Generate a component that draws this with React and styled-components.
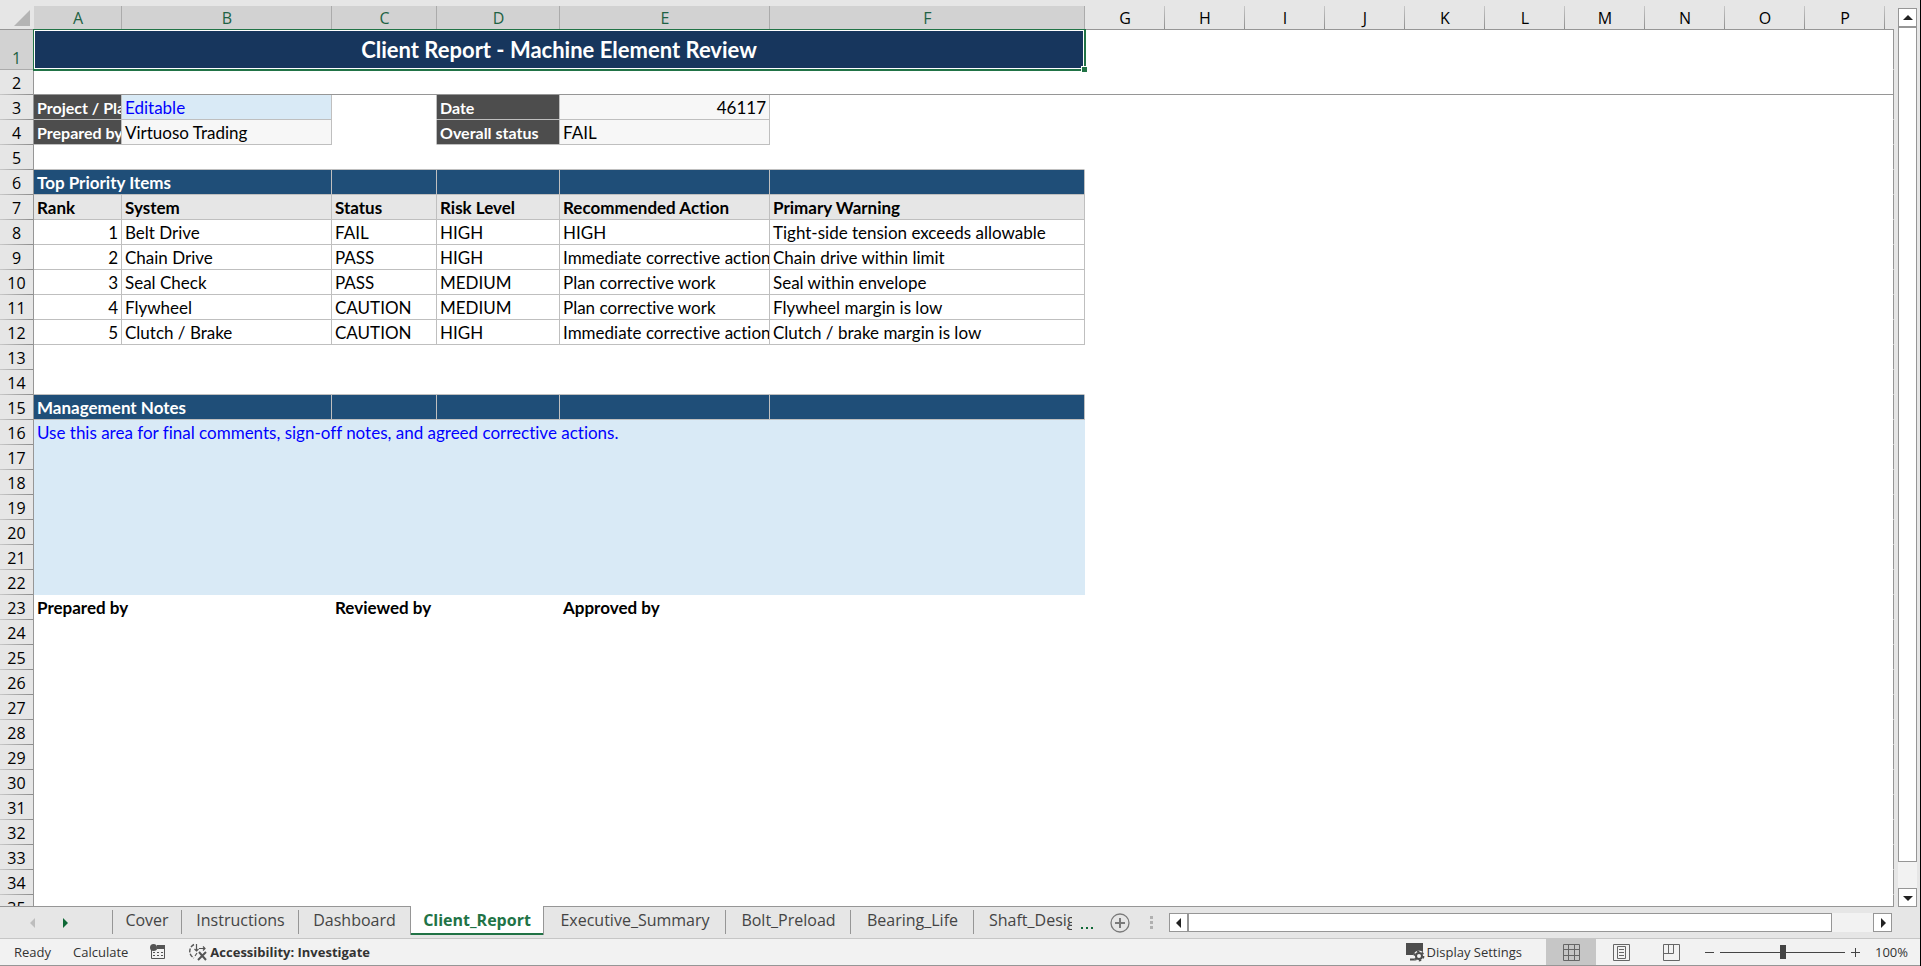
import React from "react";
import styled, { createGlobalStyle, css } from "styled-components";

const columns = [
  { id: "A", width: 88 },
  { id: "B", width: 210 },
  { id: "C", width: 105 },
  { id: "D", width: 123 },
  { id: "E", width: 210 },
  { id: "F", width: 315 },
  ..."GHIJKLMNOP".split("").map((id) => ({ id, width: 80 })),
];

const section = (title) => [
  { text: title, kind: "section", span: 2 },
  { kind: "section" },
  { kind: "section" },
  { kind: "section" },
  { kind: "section" },
];

const item = (...values) =>
  values.map((text, i) => ({ text, kind: "boxed", right: i === 0 }));

const blank = { kind: "plain" };

const rows = {
  1: [{ text: "Client Report - Machine Element Review", kind: "title", span: 6 }],
  3: [
    { text: "Project / Plant", kind: "label" },
    { text: "Editable", kind: "input" },
    { kind: "gap" },
    { text: "Date", kind: "label" },
    { text: "46117", kind: "value", right: true },
    blank,
  ],
  4: [
    { text: "Prepared by", kind: "label" },
    { text: "Virtuoso Trading", kind: "value" },
    { kind: "gap" },
    { text: "Overall status", kind: "label" },
    { text: "FAIL", kind: "value" },
    blank,
  ],
  5: [{ kind: "above", span: 6 }],
  6: section("Top Priority Items"),
  7: ["Rank", "System", "Status", "Risk Level", "Recommended Action", "Primary Warning"].map(
    (text) => ({ text, kind: "head" })
  ),
  8: item("1", "Belt Drive", "FAIL", "HIGH", "HIGH", "Tight-side tension exceeds allowable"),
  9: item("2", "Chain Drive", "PASS", "HIGH", "Immediate corrective action", "Chain drive within limit"),
  10: item("3", "Seal Check", "PASS", "MEDIUM", "Plan corrective work", "Seal within envelope"),
  11: item("4", "Flywheel", "CAUTION", "MEDIUM", "Plan corrective work", "Flywheel margin is low"),
  12: item("5", "Clutch / Brake", "CAUTION", "HIGH", "Immediate corrective action", "Clutch / brake margin is low"),
  14: [{ kind: "above", span: 6 }],
  15: section("Management Notes"),
  16: [
    {
      text: "Use this area for final comments, sign-off notes, and agreed corrective actions.",
      kind: "notes",
      span: 6,
      rowSpan: 7,
    },
  ],
  23: [
    { text: "Prepared by", kind: "sign", span: 2 },
    { text: "Reviewed by", kind: "sign", span: 2 },
    { text: "Approved by", kind: "sign" },
    blank,
  ],
};

const rowNumbers = Array.from({ length: 35 }, (_, i) => i + 1);

// rows covered by the merged notes block
const isMerged = (n) => n > 16 && n < 23;

const tabs = [
  { name: "Cover", width: 70 },
  { name: "Instructions", width: 117 },
  { name: "Dashboard", width: 111 },
  { name: "Client_Report", width: 134, active: true },
  { name: "Executive_Summary", width: 182 },
  { name: "Bolt_Preload", width: 125 },
  { name: "Bearing_Life", width: 123 },
  { name: "Shaft_Design", width: 98, cut: true },
];

const Sheet = () => (
  <Grid>
    <colgroup>
      <col width="34" />
      {columns.map((c) => (
        <col key={c.id} width={c.width} />
      ))}
      <col />
    </colgroup>
    <thead>
      <tr>
        <Corner aria-label="Select all">
          <svg width="16" height="16" viewBox="0 0 16 16">
            <path d="M16 0V16H0Z" fill="#b4b4b4" />
          </svg>
        </Corner>
        {columns.map((c, i) => (
          <ColumnHead key={c.id} scope="col" $selected={i < 6}>
            {c.id}
          </ColumnHead>
        ))}
        <ColumnHead as="td" $last />
      </tr>
    </thead>
    <tbody>
      {rowNumbers.map((n) => {
        const cells = rows[n] || [];
        return (
          <Row key={n} $tall={n === 1} $frozen={n === 2}>
            <RowHead scope="row" $selected={n === 1}>
              {n}
            </RowHead>
            {cells.map((cell, i) => (
              <Cell
                key={i}
                colSpan={cell.span}
                rowSpan={cell.rowSpan}
                $kind={cell.kind}
                $right={cell.right}
              >
                {cell.kind === "title" ? (
                  <Selection>
                    {cell.text}
                    <FillHandle />
                  </Selection>
                ) : (
                  cell.text
                )}
              </Cell>
            ))}
            <Cell colSpan={cells.length || isMerged(n) ? 11 : 17} $kind="plain" />
          </Row>
        );
      })}
    </tbody>
  </Grid>
);

const Arrow = ({ d, color = "#222" }) => (
  <svg width="10" height="10" viewBox="0 0 10 10">
    <path d={d} fill={color} />
  </svg>
);

const UP = "M5 2L10 7H0Z";
const DOWN = "M0 3H10L5 8Z";
const LEFT = "M7 0V10L2 5Z";
const RIGHT = "M3 0L8 5L3 10Z";

const App = () => {
  return (
    <Window>
      <GlobalStyle />
      <Main>
        <SheetPane>
          <Sheet />
        </SheetPane>
        <VerticalScroll>
          <ScrollButton aria-label="Scroll up">
            <Arrow d={UP} />
          </ScrollButton>
          <VerticalTrack>
            <VerticalThumb />
          </VerticalTrack>
          <ScrollButton aria-label="Scroll down">
            <Arrow d={DOWN} />
          </ScrollButton>
        </VerticalScroll>
      </Main>

      <TabBar>
        <TabNav>
          <PlainButton aria-label="Previous sheets">
            <Arrow d={LEFT} color="#bdbdbd" />
          </PlainButton>
          <PlainButton aria-label="Next sheets">
            <Arrow d={RIGHT} color="#0e6836" />
          </PlainButton>
        </TabNav>
        {tabs.map((t, i) => (
          <Tab
            key={t.name}
            $width={t.width}
            $active={t.active}
            $first={i === 0}
            $line={!t.active && !t.cut && !(tabs[i + 1] && tabs[i + 1].active)}
          >
            {t.cut ? <Clip>{t.name}</Clip> : t.name}
          </Tab>
        ))}
        <More aria-label="More sheets">
          <svg width="14" height="4" viewBox="0 0 14 4">
            <path d="M1 1H3V3H1ZM6 1H8V3H6ZM11 1H13V3H11Z" fill="#0e6836" />
          </svg>
        </More>
        <PlainButton aria-label="New sheet">
          <svg width="20" height="20" viewBox="0 0 20 20" fill="none" stroke="#7a7a7a">
            <circle cx="10" cy="10" r="9" strokeWidth="1.3" />
            <path d="M10 5V15M5 10H15" strokeWidth="2" />
          </svg>
        </PlainButton>
        <Grip>
          <svg width="4" height="14" viewBox="0 0 4 14">
            <path d="M0 0H3V3H0ZM0 5H3V8H0ZM0 10H3V13H0Z" fill="#b0b0b0" />
          </svg>
        </Grip>
        <HorizontalScroll>
          <ScrollButton aria-label="Scroll left">
            <Arrow d={LEFT} />
          </ScrollButton>
          <HorizontalTrack>
            <HorizontalThumb />
          </HorizontalTrack>
          <ScrollButton aria-label="Scroll right">
            <Arrow d={RIGHT} />
          </ScrollButton>
        </HorizontalScroll>
      </TabBar>

      <StatusBar>
        <StatusGroup>
          <span>Ready</span>
          <span>Calculate</span>
          <StatusButton aria-label="Record macro">
            <svg width="16" height="16" viewBox="0 0 16 16">
              <path d="M1.5 4V14.5H14.5V4" fill="none" stroke="#555" />
              <path d="M7 1H15V5H7Z" fill="#555" />
              <circle cx="3.5" cy="3.5" r="3.5" fill="#555" />
              <path
                d="M3 8.5H5M7 8.5H9M11 8.5H13M3 11.5H5M7 11.5H9M11 11.5H13M6 5H7"
                stroke="#555"
              />
            </svg>
          </StatusButton>
          <StatusButton $bold>
            <svg width="20" height="18" viewBox="0 0 20 18" fill="none" stroke="#555">
              <path d="M6 1.5A7.5 7.5 0 0 0 6 15" strokeWidth="1.4" strokeDasharray="4 1.4" />
              <path
                d="M8.5 1V8M6.5 6L8.5 8L10.5 6M11 5.5H17M15 3.5L17 5.5L15 7.5M9 10L7 13"
                strokeWidth="1.2"
              />
              <path d="M11 9L18 17M18 9L10 17" strokeWidth="2" />
            </svg>
            Accessibility: Investigate
          </StatusButton>
        </StatusGroup>
        <StatusGroup $end>
          <StatusButton>
            <svg width="20" height="20" viewBox="0 0 20 20">
              <path d="M1 1H18V13H1Z" fill="#4d4d4d" />
              <path d="M5 17.5H11" stroke="#4d4d4d" strokeWidth="2" />
              <circle cx="14" cy="14" r="5.5" fill="#f2f2f2" />
              <circle cx="14" cy="14" r="3" fill="none" stroke="#4d4d4d" strokeWidth="2" />
              <circle
                cx="14"
                cy="14"
                r="4.6"
                fill="none"
                stroke="#4d4d4d"
                strokeWidth="1.6"
                strokeDasharray="2.4 2.4"
              />
            </svg>
            Display Settings
          </StatusButton>
          <Views>
            <ViewButton aria-label="Normal" $on>
              <svg width="17" height="17" viewBox="0 0 17 17" fill="none" stroke="#666">
                <path d="M.5 .5H16.5V16.5H.5ZM5.5 0V17M11.5 0V17M0 5.5H17M0 11.5H17" />
              </svg>
            </ViewButton>
            <ViewButton aria-label="Page layout">
              <svg width="17" height="17" viewBox="0 0 17 17" fill="none" stroke="#666">
                <path d="M.5 .5H16.5V16.5H.5ZM4.5 2.5H12.5V14.5H4.5ZM6 5.5H11M6 8.5H11M6 11.5H11" />
              </svg>
            </ViewButton>
            <ViewButton aria-label="Page break preview">
              <svg width="17" height="17" viewBox="0 0 17 17" fill="none" stroke="#666">
                <path d="M.5 .5H16.5V16.5H.5ZM.5 9.5H10.5V.5M5.5 .5V9.5" />
              </svg>
            </ViewButton>
          </Views>
          <ZoomButton aria-label="Zoom out">
            <svg width="9" height="9" viewBox="0 0 9 9">
              <path d="M0 4.5H9" stroke="#444" />
            </svg>
          </ZoomButton>
          <ZoomSlider type="range" aria-label="Zoom" min="0" max="200" defaultValue="100" />
          <ZoomButton aria-label="Zoom in">
            <svg width="9" height="9" viewBox="0 0 9 9">
              <path d="M0 4.5H9M4.5 0V9" stroke="#444" />
            </svg>
          </ZoomButton>
          <Percent>100%</Percent>
        </StatusGroup>
      </StatusBar>
    </Window>
  );
};

const line = "#969696";
const cellLine = "#bfbfbf";
const chrome = "#e6e6e6";
const ui = `"Open Sans", "Noto Sans", sans-serif`;
const body = `Lato, "Open Sans", sans-serif`;

const GlobalStyle = createGlobalStyle`
  * {
    box-sizing: border-box;
  }
  body {
    margin: 0;
    overflow: hidden;
  }
  button {
    padding: 0;
    border: 0;
    background: none;
    font: inherit;
    color: inherit;
  }
  svg {
    display: block;
    flex: none;
  }
`;

const Window = styled.div`
  height: 100vh;
  display: flex;
  flex-direction: column;
  background: ${chrome};
  border-right: 1px solid #000;
  font-family: ${ui};
`;

const Main = styled.div`
  flex: 1;
  min-height: 0;
  display: flex;
  gap: 3px;
  padding-right: 3px;
`;

const SheetPane = styled.div`
  flex: 1;
  min-width: 0;
  overflow: hidden;
  border-bottom: 1px solid ${line};
`;

const Grid = styled.table`
  width: 100%;
  table-layout: fixed;
  border-collapse: separate;
  border-spacing: 0;
  font-family: ${body};
  font-size: 17px;
  font-variant-ligatures: none;
  line-height: 23px;
  color: #000;
`;

const Corner = styled.td`
  height: 30px;
  padding: 0 3px 3px 14px;
  vertical-align: bottom;
  border-right: 1px solid ${chrome};
  border-bottom: 1px solid ${line};
`;

const ColumnHead = styled.th`
  height: 30px;
  padding: 7px 0 0;
  font: 400 16px/22px ${ui};
  border-bottom: 1px solid ${line};
  background:
    linear-gradient(#c8c8c8, #8c8c8c) right 6px / 1px 24px no-repeat ${chrome};
  ${(p) =>
    p.$selected &&
    css`
      color: #1e6244;
      background:
        linear-gradient(#ababab, #ababab) right 6px / 1px 24px no-repeat,
        linear-gradient(#d2d2d2, #d2d2d2) 0 6px / 100% 24px no-repeat;
    `}
  ${(p) =>
    p.$last &&
    css`
      background: ${chrome};
    `}
`;

const RowHead = styled.th`
  padding: 0;
  vertical-align: bottom;
  font: 400 16px/24px ${ui};
  border-right: 1px solid ${line};
  background:
    linear-gradient(90deg, #c8c8c8, #8c8c8c) left bottom / 100% 1px no-repeat ${chrome};
  ${(p) =>
    p.$selected &&
    css`
      color: #1e6244;
      background:
        linear-gradient(#ababab, #ababab) left bottom / 100% 1px no-repeat #d2d2d2;
    `}
`;

const kinds = {
  plain: css`
    background: #fff;
  `,
  title: css`
    padding: 0;
    color: #fff;
    font-size: 22px;
    font-weight: 700;
    text-align: center;
    overflow: visible;
  `,
  label: css`
    color: #fff;
    font-size: 16px;
    font-weight: 700;
    background: #4d4d4d;
    border-color: ${cellLine};
  `,
  input: css`
    color: #00f;
    background: #d9eaf6;
    border-color: ${cellLine};
  `,
  value: css`
    background: #f7f7f7;
    border-color: ${cellLine};
  `,
  gap: css`
    border-right-color: ${cellLine};
  `,
  above: css`
    border-bottom-color: ${cellLine};
  `,
  section: css`
    color: #fff;
    font-weight: 700;
    background: #1f4e78;
    border-color: ${cellLine};
  `,
  head: css`
    font-weight: 700;
    background: #e6e6e6;
    border-color: ${cellLine};
  `,
  boxed: css`
    border-color: ${cellLine};
  `,
  notes: css`
    color: #00f;
    background: #d9eaf6;
    border-color: #d9eaf6;
  `,
  sign: css`
    font-weight: 700;
  `,
};

const Cell = styled.td`
  padding: 1px 3px 0;
  overflow: hidden;
  white-space: nowrap;
  vertical-align: top;
  text-align: ${(p) => (p.$right ? "right" : "left")};
  background: #fff;
  border: 0 solid #fff;
  border-width: 0 1px 1px 0;
  ${(p) => kinds[p.$kind]}
`;

const Row = styled.tr`
  height: ${(p) => (p.$tall ? 40 : 25)}px;
  ${Cell}:last-child {
    border-right-color: ${line};
  }
  ${(p) =>
    p.$frozen &&
    css`
      ${Cell} {
        border-bottom-color: ${line};
      }
    `}
`;

const Selection = styled.div`
  position: relative;
  height: 39px;
  line-height: 39px;
  background: #17365d;
  box-shadow: inset 0 0 0 1px #fff, 0 0 0 2px #217346;
  clip-path: inset(-1px -4px -4px -1px);
`;

const FillHandle = styled.span`
  position: absolute;
  right: -3px;
  bottom: -3px;
  width: 6px;
  height: 6px;
  background: #217346;
  border: solid #fff;
  border-width: 1px 0 0 1px;
`;

const VerticalScroll = styled.div`
  width: 20px;
  padding: 8px 1px 0;
  display: flex;
  flex-direction: column;
`;

const ScrollButton = styled.button`
  flex: none;
  width: 19px;
  height: 19px;
  display: grid;
  place-items: center;
  background: #fff;
  border: 1px solid ${line};
`;

const VerticalTrack = styled.div`
  flex: 1;
  width: 19px;
  background: #f2f2f2;
`;

const VerticalThumb = styled.div`
  height: 97%;
  background: #fff;
  border: 1px solid ${line};
`;

const TabBar = styled.div`
  height: 31px;
  display: flex;
  align-items: center;
  font-size: 16px;
  color: #444;
`;

const TabNav = styled.div`
  width: 112px;
  padding-left: 28px;
  display: flex;
  gap: 22px;
`;

const PlainButton = styled.button`
  display: grid;
  place-items: center;
`;

const Tab = styled.button`
  flex: none;
  width: ${(p) => p.$width}px;
  height: 30px;
  align-self: flex-start;
  line-height: 24px;
  padding-bottom: 4px;
  white-space: nowrap;
  background: ${(p) =>
    p.$line ? `linear-gradient(${line}, ${line}) right 3px / 1px 24px no-repeat` : "none"};
  ${(p) =>
    p.$first &&
    css`
      background:
        linear-gradient(${line}, ${line}) left 3px / 1px 24px no-repeat,
        linear-gradient(${line}, ${line}) right 3px / 1px 24px no-repeat;
    `}
  ${(p) =>
    p.$active &&
    css`
      height: 29px;
      margin-top: -1px;
      padding-bottom: 2px;
      font-weight: 700;
      color: #217346;
      background: #fff;
      border: solid ${line};
      border-width: 0 1px;
      box-shadow: inset 0 -2px #217346;
    `}
`;

const Clip = styled.span`
  display: block;
  margin-left: 15px;
  overflow: hidden;
`;

const More = styled.button`
  width: 30px;
  height: 14px;
  margin-right: 8px;
  display: grid;
  place-items: end center;
`;

const Grip = styled.div`
  padding: 0 15px 0 20px;
`;

const HorizontalScroll = styled.div`
  flex: 1;
  display: flex;
  padding-right: 28px;
`;

const HorizontalTrack = styled.div`
  flex: 1;
  background: #f2f2f2;
`;

const HorizontalThumb = styled.div`
  width: 94%;
  height: 19px;
  background: #fff;
  border: 1px solid ${line};
`;

const StatusBar = styled.footer`
  height: 28px;
  display: flex;
  justify-content: space-between;
  font-size: 13px;
  color: #333;
  background: #f2f2f2;
  border-top: 1px solid #c6c6c6;
  border-bottom: 1px solid ${line};
`;

const StatusGroup = styled.div`
  display: flex;
  align-items: center;
  gap: ${(p) => (p.$end ? 0 : 22)}px;
  padding: ${(p) => (p.$end ? "0 12px 0 0" : "0 0 0 14px")};
`;

const StatusButton = styled.button`
  display: flex;
  align-items: center;
  gap: 2px;
  font-weight: ${(p) => (p.$bold ? 700 : 400)};
`;

const Views = styled.div`
  display: flex;
  height: 100%;
  margin: 0 9px 0 24px;
`;

const ViewButton = styled.button`
  width: 50px;
  display: grid;
  place-items: center;
  background: ${(p) => (p.$on ? "#c6c6c6" : "none")};
`;

const ZoomButton = styled.button`
  padding: 6px 0;
`;

const ZoomSlider = styled.input`
  appearance: none;
  width: 125px;
  height: 14px;
  margin: 0 6px;
  background: linear-gradient(#444, #444) center / 100% 1px no-repeat;
  &::-webkit-slider-thumb {
    appearance: none;
    width: 6px;
    height: 14px;
    background: #444;
  }
`;

const Percent = styled.span`
  width: 48px;
  text-align: right;
`;

export default App;
